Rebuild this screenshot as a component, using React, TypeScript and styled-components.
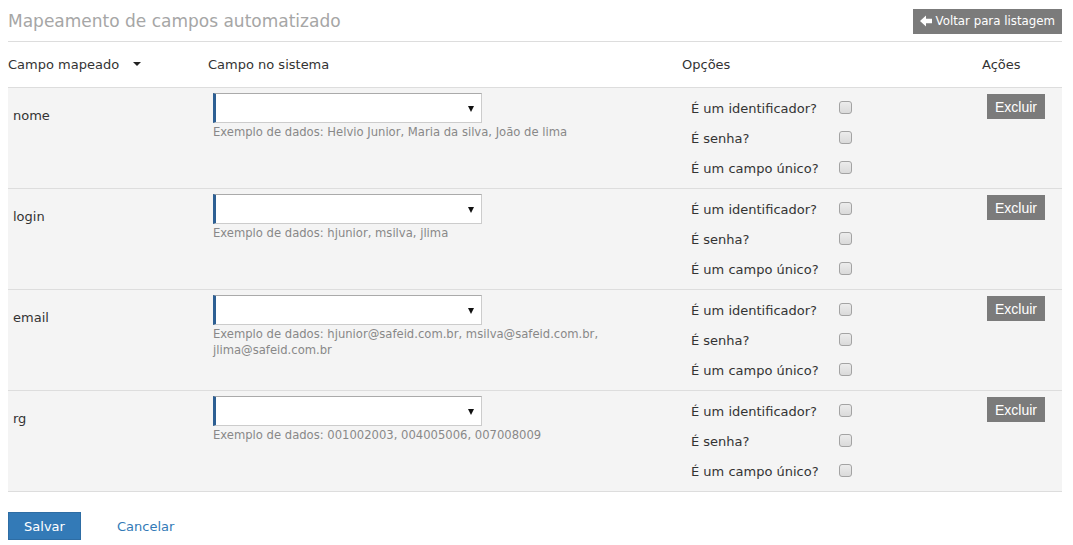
import React from 'react'
import styled, { createGlobalStyle } from 'styled-components'

const GlobalStyle = createGlobalStyle`
	body {
		margin: 0;
		background: #fff;
		font-family: "DejaVu Sans", Verdana, sans-serif;
		color: #333;
	}
`

const Page = styled.div`
	padding: 0 11px 0 8px;
`
const TopBar = styled.div`
	display: flex;
	align-items: center;
	justify-content: space-between;
	height: 41px;
	border-bottom: 1px solid #ddd;
`
const Title = styled.h1`
	margin: 0;
	font-size: 17px;
	font-weight: normal;
	color: #a6a6a6;
`
const BackButton = styled.button`
	display: flex;
	align-items: center;
	gap: 4px;
	height: 25px;
	margin-top: 1px;
	padding: 0 7px 0 7px;
	border: none;
	background: #7b7b7b;
	color: #fff;
	font-family: "DejaVu Sans", Verdana, sans-serif;
	font-size: 11.8px;
`
const Grid = styled.div`
	display: grid;
	grid-template-columns: 200px 474px 300px 1fr;
`
const HeaderRow = styled(Grid)`
	height: 45px;
	align-items: center;
	border-bottom: 1px solid #ddd;
	font-size: 13px;
`
const HeaderCell = styled.div`
	display: flex;
	align-items: center;
`
const Caret = styled.span`
	display: inline-block;
	margin-left: 14px;
	margin-bottom: 2px;
	border-left: 4px solid transparent;
	border-right: 4px solid transparent;
	border-top: 4px solid #222;
`
const Row = styled(Grid)`
	background: #f4f4f4;
	border-bottom: 1px solid #ddd;
	height: 100px;
	font-size: 13px;
`
const NameCell = styled.div`
	padding: 20px 5px 0;
`
const FieldCell = styled.div`
	padding: 5px 5px 0;
`
const Select = styled.div`
	position: relative;
	width: 265px;
	height: 28px;
	background: #fff;
	border: 1px solid #ccc;
	border-top-color: #aaa;
	border-left: 3px solid #2d5f93;
`
const SelectArrow = styled.span`
	position: absolute;
	right: 7px;
	top: 12px;
	border-left: 3.5px solid transparent;
	border-right: 3.5px solid transparent;
	border-top: 6px solid #111;
`
const Hint = styled.div`
	margin-top: 1px;
	width: 400px;
	font-size: 11.6px;
	line-height: 16px;
	color: #888;
`
const OptionsCell = styled.div`
	padding: 5px 0 0 9px;
`
const OptionLine = styled.label`
	display: grid;
	grid-template-columns: 148px 14px;
	align-items: center;
	height: 30px;
`
const CheckBox = styled.span`
	width: 11px;
	height: 11px;
	border: 1px solid #a3a3a3;
	border-radius: 3px;
	background: linear-gradient(#ececec, #dadada);
	margin-bottom: 1px;
`
const ActionsCell = styled.div`
	padding: 6px 5px 0;
`
const DeleteButton = styled.button`
	height: 25px;
	padding: 0 8px;
	border: none;
	background: #7b7b7b;
	color: #fff;
	font-family: "Liberation Sans", Arial, sans-serif;
	font-size: 14px;
`
const Footer = styled.div`
	display: flex;
	align-items: center;
	gap: 36px;
	padding-top: 20px;
`
const SaveButton = styled.button`
	width: 73px;
	height: 28px;
	border: 1px solid #2e6da4;
	background: #337ab7;
	color: #fff;
	font-family: "DejaVu Sans", Verdana, sans-serif;
	font-size: 13px;
`
const CancelLink = styled.a`
	color: #337ab7;
	font-size: 13px;
	text-decoration: none;
`

const ArrowLeft = () => (
	<svg width="12" height="12" viewBox="0 0 12 12">
		<path d="M0 6 L6 0.5 L6 3.8 L12 3.8 L12 8.2 L6 8.2 L6 11.5 Z" fill="#fff" />
	</svg>
)

const rows = [
	{ name: 'nome', sample: 'Helvio Junior, Maria da silva, João de lima' },
	{ name: 'login', sample: 'hjunior, msilva, jlima' },
	{ name: 'email', sample: 'hjunior@safeid.com.br, msilva@safeid.com.br, jlima@safeid.com.br' },
	{ name: 'rg', sample: '001002003, 004005006, 007008009' },
]

const options = ['É um identificador?', 'É senha?', 'É um campo único?']

const App = () => {
	return <>
		<GlobalStyle />
		<Page>
			<TopBar>
				<Title>Mapeamento de campos automatizado</Title>
				<BackButton><ArrowLeft /> Voltar para listagem</BackButton>
			</TopBar>
			<HeaderRow>
				<HeaderCell>Campo mapeado <Caret /></HeaderCell>
				<HeaderCell>Campo no sistema</HeaderCell>
				<HeaderCell>Opções</HeaderCell>
				<HeaderCell>Ações</HeaderCell>
			</HeaderRow>
			{rows.map(row => (
				<Row key={row.name}>
					<NameCell>{row.name}</NameCell>
					<FieldCell>
						<Select><SelectArrow /></Select>
						<Hint>Exemplo de dados: {row.sample}</Hint>
					</FieldCell>
					<OptionsCell>
						{options.map(option => (
							<OptionLine key={option}>
								{option}
								<CheckBox />
							</OptionLine>
						))}
					</OptionsCell>
					<ActionsCell>
						<DeleteButton>Excluir</DeleteButton>
					</ActionsCell>
				</Row>
			))}
			<Footer>
				<SaveButton>Salvar</SaveButton>
				<CancelLink href="#">Cancelar</CancelLink>
			</Footer>
		</Page>
	</>
}

export default App
